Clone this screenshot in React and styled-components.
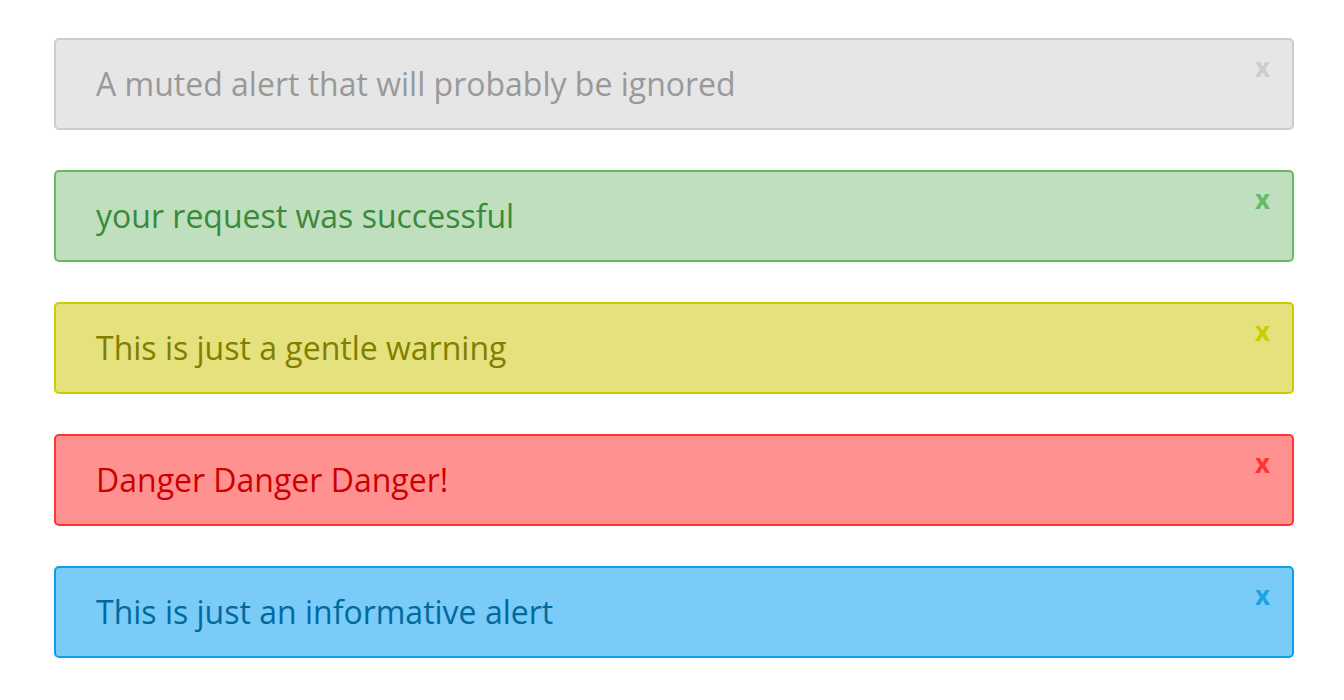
import React from "react";
import styled, { createGlobalStyle } from "styled-components";

const Global = createGlobalStyle`
  html, body { margin: 0; padding: 0; background: #fff; }
  body { font-family: "Open Sans", "Noto Sans", sans-serif; }
`;

const variants = {
  muted: { bg: "#e6e6e6", border: "#cccccc", text: "#999999", close: "#cccccc" },
  success: { bg: "#bfdfbf", border: "#66bb66", text: "#3a8a3a", close: "#66bb66" },
  warning: { bg: "#e5e17c", border: "#cccc00", text: "#7f7f00", close: "#cccc00" },
  danger: { bg: "#ff9290", border: "#ff3333", text: "#cc0000", close: "#ff3333" },
  info: { bg: "#7bcbf8", border: "#0aa1e8", text: "#006a9e", close: "#1aa3e8" },
};

const Page = styled.div`
  display: flex;
  flex-direction: column;
  gap: 40px;
  padding: 38px 50px 0 54px;
`;

const Alert = styled.div`
  position: relative;
  box-sizing: border-box;
  height: 92px;
  display: flex;
  align-items: center;
  padding: 0 40px;
  background: ${(p) => variants[p.$v].bg};
  border: 2px solid ${(p) => variants[p.$v].border};
  border-radius: 5px;
  color: ${(p) => variants[p.$v].text};
  font-size: 32px;
  line-height: 1;
`;

const Message = styled.span``;

const Close = styled.span`
  position: absolute;
  top: 14px;
  right: 22px;
  font-size: 26px;
  font-weight: 700;
  line-height: 1;
  color: ${(p) => variants[p.$v].close};
  cursor: pointer;
`;

const alerts = [
  ["muted", "A muted alert that will probably be ignored"],
  ["success", "your request was successful"],
  ["warning", "This is just a gentle warning"],
  ["danger", "Danger Danger Danger!"],
  ["info", "This is just an informative alert"],
];

export default function App() {
  return (
    <>
      <Global />
      <Page>
        {alerts.map(([v, t]) => (
          <Alert key={v} $v={v}>
            <Message>{t}</Message>
            <Close $v={v}>x</Close>
          </Alert>
        ))}
      </Page>
    </>
  );
}
